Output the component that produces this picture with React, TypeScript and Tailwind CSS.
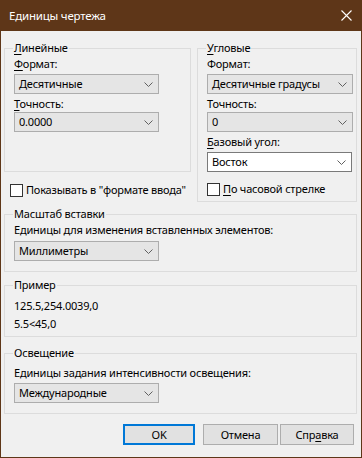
import React from "react";

const font = { fontFamily: '"Noto Sans", "Open Sans", sans-serif' };

function Chevron() {
  return (
    <svg width="9" height="5" viewBox="0 0 9 5" className="shrink-0">
      <path d="M0.5 0.5 L4.5 4.5 L8.5 0.5" fill="none" stroke="#606060" strokeWidth="1" />
    </svg>
  );
}

function Select({ value, width, white }: { value: string; width: string; white?: boolean }) {
  return (
    <div
      className={`${width} h-[20px] flex items-center justify-between pl-[4px] pr-[5px] border ${
        white ? "bg-white border-[#7a7a7a]" : "bg-[#e5e5e5] border-[#adadad]"
      }`}
    >
      <span className="leading-[16px]">{value}</span>
      <Chevron />
    </div>
  );
}

function Label({ children }: { children: React.ReactNode }) {
  return <div className="h-[16px] leading-[16px] whitespace-nowrap">{children}</div>;
}

function U({ children }: { children: React.ReactNode }) {
  return <span className="underline underline-offset-[2px]">{children}</span>;
}

function Group({
  title,
  className,
  children,
}: {
  title: React.ReactNode;
  className: string;
  children: React.ReactNode;
}) {
  return (
    <div className={`border border-[#dcdcdc] pl-[8px] ${className}`}>
      <div className="-mt-[9px] w-fit px-[1px] bg-[#f0f0f0] h-[16px] leading-[16px]">{title}</div>
      <div className="pl-[1px]">{children}</div>
    </div>
  );
}

function Check({ children }: { children: React.ReactNode }) {
  return (
    <div className="flex items-center h-[16px] whitespace-nowrap">
      <div className="w-[13px] h-[13px] bg-white border border-[#333333] shrink-0" />
      <span className="ml-[3px] leading-[16px]">{children}</span>
    </div>
  );
}

function Button({ children, width, primary }: { children: React.ReactNode; width: string; primary?: boolean }) {
  return (
    <div
      className={`${width} h-[21px] flex items-center justify-center bg-[#e1e1e1] ${
        primary ? "border-2 border-[#0078d7]" : "border border-[#adadad]"
      }`}
    >
      <span className="leading-[16px]">{children}</span>
    </div>
  );
}

export default function App() {
  return (
    <div
      className="w-[362px] h-[458px] bg-[#5e3618] flex flex-col text-[11px] tracking-[-0.2px] text-black"
      style={font}
    >
      <div className="h-[31px] flex items-center justify-between pl-[9px] pr-[10px] text-white text-[11.5px] tracking-[-0.2px] shrink-0">
        <span className="leading-[16px]">Единицы чертежа</span>
        <svg width="11" height="11" viewBox="0 0 11 11">
          <path d="M0.5 0.5 L10.5 10.5 M10.5 0.5 L0.5 10.5" stroke="#ffffff" strokeWidth="1.1" />
        </svg>
      </div>
      <div className="flex-1 mx-[1px] mb-[1px] bg-[#f0f0f0] pl-[3px] pr-[4px] pt-[17px]">
        <div className="flex">
          <div className="w-[187px] flex flex-col">
            <Group title={<><U>Л</U>инейные</>} className="h-[124px]">
              <Label>
                <U>Ф</U>ормат:
              </Label>
              <div className="mt-[2px]">
                <Select value="Десятичные" width="w-[145px]" />
              </div>
              <div className="mt-[2px]">
                <Label>
                  <U>Т</U>очность:
                </Label>
              </div>
              <Select value="0.0000" width="w-[145px]" />
            </Group>
            <div className="mt-[10px] pl-[6px]">
              <Check>Показывать в "формате ввода"</Check>
            </div>
          </div>
          <div className="ml-[6px] flex-1">
            <Group title={<><U>У</U>гловые</>} className="h-[154px]">
              <Label>Формат:</Label>
              <div className="mt-[2px]">
                <Select value="Десятичные градусы" width="w-[146px]" />
              </div>
              <div className="mt-[2px]">
                <Label>Точность:</Label>
              </div>
              <Select value="0" width="w-[146px]" />
              <div className="mt-[2px]">
                <Label>
                  <U>Б</U>азовый угол:
                </Label>
              </div>
              <div className="mt-[2px]">
                <Select value="Восток" width="w-[145px]" white />
              </div>
              <div className="mt-[9px]">
                <Check>
                  <U>П</U>о часовой стрелке
                </Check>
              </div>
            </Group>
          </div>
        </div>

        <Group title="Масштаб вставки" className="h-[58px] mt-[12px]">
          <Label>Единицы для изменения вставленных элементов:</Label>
          <div className="mt-[3px]">
            <Select value="Миллиметры" width="w-[145px]" />
          </div>
        </Group>

        <Group title="Пример" className="h-[52px] mt-[13px]">
          <div className="pt-[4px] leading-[18px]">
            <div>125.5,254.0039,0</div>
            <div>5.5&lt;45,0</div>
          </div>
        </Group>

        <Group title="Освещение" className="h-[61px] mt-[16px]">
          <div className="pt-[4px]">
            <Label>Единицы задания интенсивности освещения:</Label>
          </div>
          <div className="mt-[2px]">
            <Select value="Международные" width="w-[145px]" />
          </div>
        </Group>

        <div className="flex justify-end mt-[10px] pr-[3px]">
          <Button width="w-[72px]" primary>
            OK
          </Button>
          <div className="ml-[8px]">
            <Button width="w-[75px]">Отмена</Button>
          </div>
          <div className="ml-[2px]">
            <Button width="w-[74px]">
              Спр<U>а</U>вка
            </Button>
          </div>
        </div>
      </div>
    </div>
  );
}
